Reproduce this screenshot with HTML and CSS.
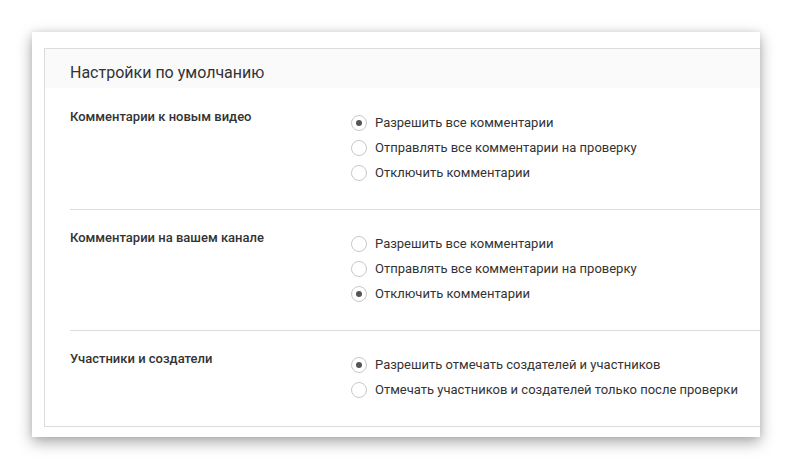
FILE: index.html
```html
<!DOCTYPE html>
<html lang="ru">
<head>
<meta charset="utf-8">
<link rel="stylesheet" href="styles.css">
</head>
<body>
<div class="card">
  <div class="panel">
    <div class="panel-head">Настройки по умолчанию</div>
    <div class="sections">
      <div class="section">
        <div class="label">Комментарии к новым видео</div>
        <div class="options">
          <div class="opt"><span class="radio on"></span>Разрешить все комментарии</div>
          <div class="opt"><span class="radio"></span>Отправлять все комментарии на проверку</div>
          <div class="opt"><span class="radio"></span>Отключить комментарии</div>
        </div>
      </div>
      <div class="section">
        <div class="label">Комментарии на вашем канале</div>
        <div class="options">
          <div class="opt"><span class="radio"></span>Разрешить все комментарии</div>
          <div class="opt"><span class="radio"></span>Отправлять все комментарии на проверку</div>
          <div class="opt"><span class="radio on"></span>Отключить комментарии</div>
        </div>
      </div>
      <div class="section">
        <div class="label">Участники и создатели</div>
        <div class="options">
          <div class="opt"><span class="radio on"></span>Разрешить отмечать создателей и участников</div>
          <div class="opt"><span class="radio"></span>Отмечать участников и создателей только после проверки</div>
        </div>
      </div>
    </div>
  </div>
</div>
</body>
</html>
```

FILE: styles.css
```css
html, body {
  margin: 0;
  padding: 0;
  background: #fff;
}
body {
  font-family: Roboto, "Noto Sans", Arial, sans-serif;
  color: #333;
  width: 792px;
  height: 470px;
  overflow: hidden;
}
.card {
  margin: 32px 0 0 32px;
  width: 716px;
  height: 389px;
  padding: 16px 0 0 12px;
  background: #fff;
  overflow: hidden;
  box-shadow: 0 5px 14px rgba(0, 0, 0, 0.35), 0 0 6px rgba(0, 0, 0, 0.08);
}
.panel {
  width: 900px;
  border: 1px solid #dcdcdc;
  box-sizing: border-box;
  height: 379px;
}
.panel-head {
  height: 25px;
  padding-top: 14px;
  background: #fafafa;
  padding-left: 25px;
  font-size: 16px;
  line-height: 20px;
  color: #333;
}
.sections {
  margin-left: 25px;
}
.section {
  display: flex;
  padding: 20px 0 24px;
  border-top: 1px solid #dcdcdc;
}
.section:first-child {
  border-top: none;
  padding-top: 21px;
}
.label {
  width: 281px;
  flex: none;
  font-size: 13px;
  font-weight: 500;
  line-height: 16px;
  color: #333;
}
.options {
  margin-top: 1px;
}
.opt {
  display: flex;
  align-items: center;
  height: 25px;
  font-size: 13px;
  color: #333;
}
.radio {
  width: 14px;
  height: 14px;
  border: 1px solid #c8c8c8;
  border-radius: 50%;
  margin-right: 8px;
  box-sizing: content-box;
  background: #fff;
  position: relative;
  flex: none;
}
.radio.on::after {
  content: "";
  position: absolute;
  left: 4px;
  top: 4px;
  width: 6px;
  height: 6px;
  border-radius: 50%;
  background: #555;
}
```
